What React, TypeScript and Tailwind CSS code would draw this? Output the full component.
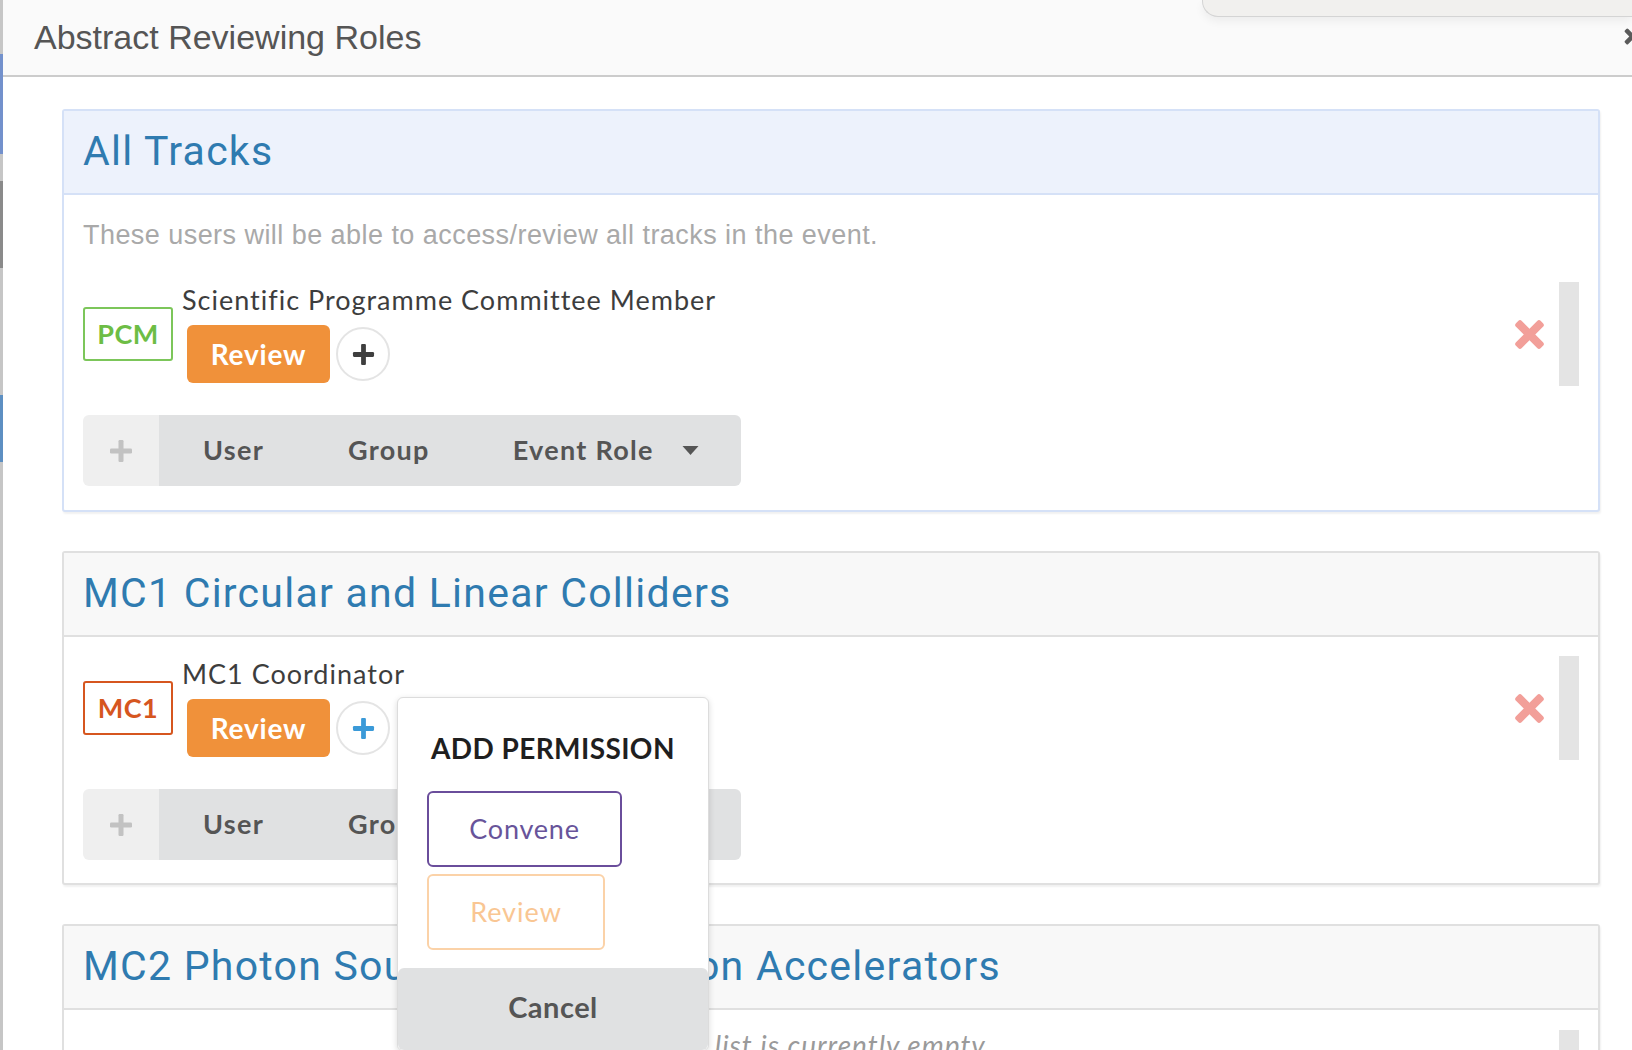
import React from "react";

const muli = "font-['Lato','Noto_Sans',sans-serif]";

function PlusIcon({ className }: { className?: string }) {
  return (
    <svg viewBox="0 0 24 24" className={className} fill="currentColor">
      <rect x="9.5" y="1" width="5" height="22" rx="1.2" />
      <rect x="1" y="9.5" width="22" height="5" rx="1.2" />
    </svg>
  );
}

function TimesIcon({ className }: { className?: string }) {
  return (
    <svg viewBox="0 0 30 30" className={className} fill="currentColor">
      <g transform="rotate(45 15 15)">
        <rect x="11" y="-2" width="8" height="34" rx="2.5" />
        <rect x="-2" y="11" width="34" height="8" rx="2.5" />
      </g>
    </svg>
  );
}

type Role = {
  code: string;
  name: string;
  color: "green" | "red";
  plusBlue?: boolean;
};

function RoleRow({ role }: { role: Role }) {
  const badge =
    role.color === "green"
      ? "border-[#7cc65a] text-[#6dbd45]"
      : "border-[#d6561f] text-[#d6561f]";
  return (
    <div className="flex h-[104px] items-center">
      <div className="flex items-center">
        <div
          className={`flex h-[54px] w-[90px] items-center justify-center rounded-[3px] border-2 bg-white text-[27px] font-bold tracking-[0.5px] ${badge} ${muli}`}
        >
          {role.code}
        </div>
        <div className="ml-[9px] flex flex-col">
          <span className={`text-[27px] leading-[30px] tracking-[1px] text-[#3d3d3d] ${muli}`}>
            {role.name}
          </span>
          <div className="mt-[10px] flex items-center gap-[6px] pl-[5px]">
            <div
              className={`flex h-[58px] w-[143px] items-center justify-center rounded-[6px] bg-[#f0913a] text-[28px] font-bold tracking-[0.8px] text-white ${muli}`}
            >
              Review
            </div>
            <div className="flex h-[54px] w-[54px] items-center justify-center rounded-full border-2 border-[#e4e4e4] bg-white">
              <PlusIcon
                className={`h-[23px] w-[23px] ${role.plusBlue ? "text-[#3b9ad8]" : "text-[#3f3f3f]"}`}
              />
            </div>
          </div>
        </div>
      </div>
      <div className="ml-auto flex items-center gap-[14px]">
        <TimesIcon className="h-[31px] w-[31px] text-[#f29f99]" />
        <div className="h-[104px] w-[20px] bg-[#e4e4e4]" />
      </div>
    </div>
  );
}

function PrincipalPicker() {
  return (
    <div className={`flex h-[71px] w-[658px] overflow-hidden rounded-[6px] ${muli}`}>
      <div className="flex w-[76px] items-center justify-center bg-[#efefef]">
        <PlusIcon className="h-[24px] w-[24px] text-[#c2c2c2]" />
      </div>
      <div className="flex flex-1 items-center bg-[#e0e1e2] text-[27px] font-bold tracking-[1.3px] text-[#555555]">
        <span className="ml-[44px]">User</span>
        <span className="ml-[84px]">Group</span>
        <span className="ml-[83px]">Event Role</span>
        <svg viewBox="0 0 16 9" className="ml-[28px] h-[9px] w-[17px] text-[#555555]" fill="currentColor">
          <path d="M0 0h16L8 9z" />
        </svg>
      </div>
    </div>
  );
}

function Card({
  title,
  tone,
  description,
  role,
  empty,
}: {
  title: string;
  tone: "blue" | "grey";
  description?: string;
  role?: Role;
  empty?: string;
}) {
  const border = tone === "blue" ? "border-[#d5e1f7]" : "border-[#e0e0e0]";
  const head = tone === "blue" ? "bg-[#edf2fc]" : "bg-[#f8f8f8]";
  return (
    <section
      className={`shrink-0 rounded-[3px] border-2 bg-white shadow-[1px_2px_2px_rgba(0,0,0,0.06)] ${border}`}
    >
      <div className={`flex h-[84px] items-center border-b-2 px-[19px] ${border} ${head}`}>
        <h2 className="font-['Roboto','Liberation_Sans',sans-serif] text-[41px] tracking-[1.25px] text-[#2f7bb0]">
          {title}
        </h2>
      </div>
      {role ? (
        <div className={`px-[19px] ${description ? "pb-[24px] pt-[25px]" : "pb-[23px] pt-[19px]"}`}>
          {description && (
            <p className="mb-[32px] font-['Liberation_Sans',sans-serif] text-[27px] leading-[30px] tracking-[0.45px] text-[#a9a9a9]">
              {description}
            </p>
          )}
          <RoleRow role={role} />
          <div className="mt-[29px]">
            <PrincipalPicker />
          </div>
        </div>
      ) : (
        <div className="flex items-start px-[19px] pt-[20px]">
          <p
            className={`pl-[578px] text-[28px] italic leading-[30px] tracking-[1px] text-[#9a9a9a] ${muli}`}
          >
            {empty}
          </p>
          <div className="ml-auto h-[104px] w-[20px] bg-[#e4e4e4]" />
        </div>
      )}
    </section>
  );
}

function AddPermission() {
  return (
    <div
      className={`absolute left-[397px] top-[697px] flex w-[312px] flex-col rounded-[6px] border border-[#dcdcdc] bg-white shadow-[0_2px_6px_rgba(0,0,0,0.15)] ${muli}`}
    >
      <div className="px-[33px] pt-[36px] text-[28px] font-bold leading-[28px] tracking-[0.4px] text-[#1f1f1f]">
        ADD PERMISSION
      </div>
      <div className="flex flex-col items-start gap-[7px] px-[29px] pb-[18px] pt-[29px]">
        <div className="flex h-[76px] w-[195px] items-center justify-center rounded-[6px] border-2 border-[#6a4d9b] text-[27px] tracking-[0.8px] text-[#68549a]">
          Convene
        </div>
        <div className="flex h-[76px] w-[178px] items-center justify-center rounded-[6px] border-2 border-[#fbd2a8] text-[27px] tracking-[1px] text-[#f9c693]">
          Review
        </div>
      </div>
      <div className="flex h-[82px] items-center justify-center rounded-[6px] bg-[#e0e1e2] pb-[5px] text-[29px] font-bold tracking-[0.5px] text-[#555555]">
        Cancel
      </div>
    </div>
  );
}

export default function App() {
  return (
    <div className="relative flex h-[1050px] w-[1632px] overflow-hidden bg-white">
      {/* page behind the dialog */}
      <div className="flex w-[3px] shrink-0 flex-col bg-[#c6c6c6]">
        <div className="mt-[54px] h-[100px] bg-[#7391cc]" />
        <div className="mt-[27px] h-[87px] bg-[#8a8a8a]" />
        <div className="mt-[127px] h-[67px] bg-[#5d8fc2]" />
      </div>

      <div className="flex min-w-0 flex-1 flex-col">
        <header className="flex h-[77px] shrink-0 items-center border-b-2 border-[#cccccc] bg-[#fafafa] pl-[31px]">
          <h1 className="font-['Liberation_Sans',sans-serif] text-[34px] text-[#555555]">
            Abstract Reviewing Roles
          </h1>
        </header>

        <main className="flex flex-col gap-[39px] pl-[59px] pr-[32px] pt-[32px]">
          <Card
            title="All Tracks"
            tone="blue"
            description="These users will be able to access/review all tracks in the event."
            role={{ code: "PCM", name: "Scientific Programme Committee Member", color: "green" }}
          />
          <Card
            title="MC1 Circular and Linear Colliders"
            tone="grey"
            role={{ code: "MC1", name: "MC1 Coordinator", color: "red", plusBlue: true }}
          />
          <Card
            title="MC2 Photon Sources and Electron Accelerators"
            tone="grey"
            empty="The list is currently empty"
          />
        </main>
      </div>

      {/* browser chrome bits over the top right */}
      <div className="absolute left-[1202px] right-0 top-0 h-[17px] rounded-bl-[16px] border-b border-l border-[#d4d4d4] bg-[#f1f0ee] shadow-[0_4px_10px_rgba(0,0,0,0.06)]" />
      <TimesIcon className="absolute left-[1624px] top-[28px] h-[17px] w-[17px] text-[#5a5a5a]" />

      <AddPermission />
    </div>
  );
}
